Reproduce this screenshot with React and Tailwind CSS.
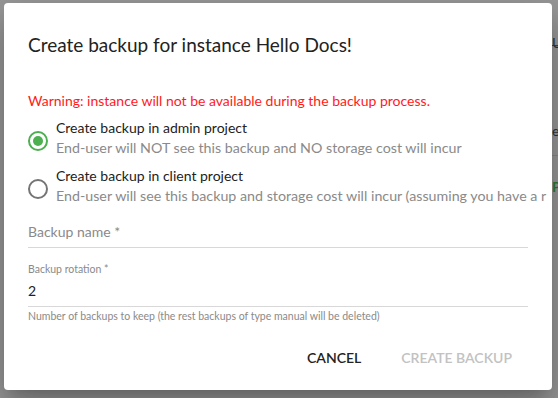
import React from "react";

export default function App() {
  return (
    <div className="relative w-[558px] h-[398px] overflow-hidden bg-[#999999]" style={{ fontFamily: "Lato, 'Open Sans', sans-serif" }}>
      {/* background hints */}
      <div className="absolute left-[552px] top-[45px] w-[6px] h-px bg-[#444]" />
      <div className="absolute left-[552px] top-[155px] w-[6px] h-px bg-[#888]" />
      <div className="absolute left-[552px] top-[120px] text-[14px] text-[#333]">ec</div>
      <div className="absolute left-[552px] top-[176px] text-[14px] font-bold text-[#2e7d32]">P</div>
      <div className="absolute left-[552px] top-[32px] text-[14px] text-[#333]">U</div>

      <div className="absolute left-[4px] top-[3px] w-[548px] h-[387px] bg-white rounded-[4px] shadow-[0_11px_15px_-7px_rgba(0,0,0,0.2),0_24px_38px_3px_rgba(0,0,0,0.14),0_9px_46px_8px_rgba(0,0,0,0.12)] overflow-hidden">
        <div className="flex flex-col h-full">
          <div className="px-6 pt-[26px] pb-5">
            <h2 className="text-[19px] leading-[32px] text-[#222] whitespace-nowrap">Create backup for instance Hello Docs!</h2>
          </div>
          <div className="px-6 flex flex-col">
            <div className="mt-[10px] text-[14px] leading-5 text-[#ff1a1a] whitespace-nowrap">Warning: instance will not be available during the backup process.</div>
            <div className="mt-[7px] flex items-start gap-[8px] whitespace-nowrap">
              <div className="mt-[13px] w-[20px] h-[20px] rounded-full border-2 border-[#4caf50] flex items-center justify-center shrink-0">
                <div className="w-[10px] h-[10px] rounded-full bg-[#4caf50]" />
              </div>
              <div className="flex flex-col">
                <span className="text-[14px] leading-5 text-[#222]">Create backup in admin project</span>
                <span className="text-[14.25px] leading-5 text-[#8a8a8a]">End-user will NOT see this backup and NO storage cost will incur</span>
              </div>
            </div>
            <div className="mt-[8px] flex items-start gap-[8px] whitespace-nowrap">
              <div className="mt-[13px] w-[20px] h-[20px] rounded-full border-2 border-[#757575] shrink-0" />
              <div className="flex flex-col">
                <span className="text-[14px] leading-5 text-[#222]">Create backup in client project</span>
                <span className="text-[14.25px] leading-5 text-[#8a8a8a]">End-user will see this backup and storage cost will incur (assuming you have a r</span>
              </div>
            </div>
            <div className="mt-[13px] w-[500px] border-b border-[#d8d8d8] pb-[4px]">
              <span className="text-[14px] leading-5 text-[#8a8a8a]">Backup name *</span>
            </div>
            <div className="mt-[15px] w-[500px] border-b border-[#d8d8d8] flex flex-col">
              <span className="text-[10.5px] leading-3 text-[#8a8a8a]">Backup rotation *</span>
              <span className="mt-[6px] pb-[5px] text-[14px] leading-5 text-[#222]">2</span>
            </div>
            <div className="mt-[3px] text-[10.5px] leading-3 text-[#8a8a8a] whitespace-nowrap">Number of backups to keep (the rest backups of type manual will be deleted)</div>
          </div>
          <div className="mt-auto mb-[22px] flex justify-end gap-[40px] pr-[40px]">
            <button className="text-[14px] font-semibold text-[#222]">CANCEL</button>
            <button className="text-[14px] font-semibold text-[#c2c2c2]">CREATE BACKUP</button>
          </div>
        </div>
      </div>
    </div>
  );
}
